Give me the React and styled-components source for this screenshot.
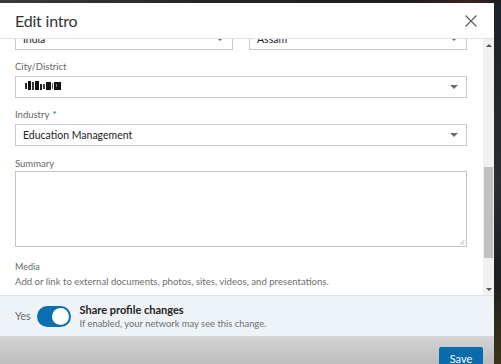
import React, { useLayoutEffect, useRef } from "react";
import styled, { createGlobalStyle } from "styled-components";

const Global = createGlobalStyle`
  html, body { margin: 0; padding: 0; }
  body {
    width: 501px; height: 364px; overflow: hidden;
    background: #1c1e20;
    font-family: Lato, "Noto Sans", sans-serif;
  }
`;

const Page = styled.div`
  width: 501px;
  height: 364px;
  overflow: hidden;
  display: flex;
  flex-direction: column;
  background: linear-gradient(90deg, #1a1c1f 0%, #23262a 60%, #2b2620 100%);
`;

const TopStrip = styled.div`
  height: 3px;
  flex: none;
  background: linear-gradient(90deg, #3a3a3a 0%, #262626 40%, #1b1d20 80%, #3a2222 94%, #1b1d20 100%);
`;

const Row = styled.div`
  display: flex;
  flex: 1;
  min-height: 0;
`;

const Dialog = styled.div`
  width: 494px;
  flex: none;
  display: flex;
  flex-direction: column;
  background: #fff;
`;

const Edge = styled.div`
  flex: 1;
  background: linear-gradient(180deg, #1c222a 0%, #2a2e33 50%, #1d1f22 75%, #3a3418 100%);
`;

const Header = styled.div`
  height: 35px;
  flex: none;
  display: flex;
  align-items: center;
  justify-content: space-between;
  padding: 0 17px 0 15px;
  border-bottom: 1px solid #e3e3e3;
`;

const Title = styled.h2`
  margin: 0;
  font-weight: 400;
  font-size: 16px;
  color: #333;
  letter-spacing: -0.2px;
`;

const CloseButton = styled.button`
  border: 0;
  background: none;
  padding: 0;
  width: 12px;
  height: 12px;
  display: flex;
  color: #5a5a5a;
`;

const Body = styled.div`
  height: 256px;
  flex: none;
  display: flex;
`;

const Scroller = styled.div`
  flex: 1;
  overflow: hidden;
`;

const Content = styled.div`
  padding: 16px 16px 40px 15px;
`;

const TwoCols = styled.div`
  display: grid;
  grid-template-columns: 218px 1fr;
  column-gap: 16px;
`;

const Field = styled.div`
  display: flex;
  flex-direction: column;
  margin-top: ${(p) => p.$top ?? 10}px;
`;

const Label = styled.label`
  font-size: 9.5px;
  line-height: 14px;
  color: #666;
  margin-bottom: ${(p) => p.$gap ?? 2}px;
`;

const Required = styled.span`
  color: #0073b1;
  margin-left: 3px;
`;

const Select = styled.div`
  height: 22px;
  box-sizing: border-box;
  border: 1px solid #c9c9c9;
  display: flex;
  align-items: center;
  justify-content: space-between;
  padding: 0 8px 0 7px;
  font-size: 10.5px;
  color: #222;
`;

const Caret = styled.span`
  width: 0;
  height: 0;
  border-left: 4px solid transparent;
  border-right: 4px solid transparent;
  border-top: 4px solid #6b6b6b;
`;

const TextArea = styled.div`
  height: 76px;
  box-sizing: border-box;
  border: 1px solid #c4c4c4;
  position: relative;
`;

const Grip = styled.svg`
  position: absolute;
  right: 1px;
  bottom: 1px;
`;

const MediaTitle = styled.div`
  margin-top: 13px;
  font-size: 9px;
  line-height: 13px;
  color: #666;
`;

const MediaText = styled.div`
  margin-top: 2px;
  font-size: 9.6px;
  line-height: 14px;
  color: #6e6e6e;
`;

const ScrollTrack = styled.div`
  width: 11px;
  flex: none;
  background: #f1f1f1;
  display: flex;
  flex-direction: column;
  align-items: center;
`;

const ScrollArrow = styled.div`
  height: 12px;
  flex: none;
  display: flex;
  align-items: center;
  justify-content: center;
  &::after {
    content: "";
    width: 0; height: 0;
    border-left: 3px solid transparent;
    border-right: 3px solid transparent;
    ${(p) => (p.$down ? "border-top: 3px solid #555;" : "border-bottom: 3px solid #555;")}
  }
`;

const ScrollMid = styled.div`
  flex: 1;
  width: 100%;
  display: flex;
  flex-direction: column;
  align-items: center;
`;

const Thumb = styled.div`
  width: 9px;
  height: 91px;
  margin-top: 116px;
  background: #c1c1c1;
`;

const Footer = styled.div`
  height: 42px;
  flex: none;
  box-sizing: border-box;
  border-top: 1px solid #dde3e8;
  border-bottom: 1px solid #cfd6dc;
  background: #eef3f7;
  display: flex;
  align-items: center;
  padding-left: 15px;
`;

const YesText = styled.span`
  font-size: 10.5px;
  color: #666;
  margin-right: 6px;
`;

const Toggle = styled.div`
  width: 34px;
  height: 21px;
  box-sizing: border-box;
  border-radius: 11px;
  background: #0a6fb0;
  display: flex;
  align-items: center;
  justify-content: flex-end;
  padding-right: 2px;
  margin-right: 9px;
`;

const Knob = styled.div`
  width: 17px;
  height: 17px;
  border-radius: 50%;
  background: #fff;
`;

const ShareText = styled.div`
  display: flex;
  flex-direction: column;
`;

const ShareTitle = styled.div`
  font-size: 11px;
  line-height: 14px;
  font-weight: 700;
  color: #222;
`;

const ShareSub = styled.div`
  font-size: 9.4px;
  line-height: 13px;
  color: #707070;
`;

const Actions = styled.div`
  flex: 1;
  background: linear-gradient(180deg, #d4d4d4 0%, #c4c4c4 50%, #b6b6b6 100%);
  display: flex;
  justify-content: flex-end;
  align-items: flex-start;
  padding: 10px 11px 0 0;
`;

const SaveButton = styled.button`
  width: 44px;
  height: 26px;
  border: 0;
  border-radius: 2px;
  background: #0a6bab;
  color: #fff;
  font-family: Lato, "Noto Sans", sans-serif;
  font-size: 11px;
  padding: 0;
  padding-bottom: 4px;
`;

function Redacted() {
  return (
    <svg width="40" height="10" viewBox="0 0 40 10">
      <rect x="2" y="2" width="2" height="6" fill="#222" />
      <rect x="5" y="0" width="3" height="9" fill="#111" />
      <rect x="9" y="1" width="2" height="8" fill="#333" />
      <rect x="12" y="0" width="4" height="9" fill="#111" />
      <rect x="17" y="3" width="2" height="6" fill="#222" />
      <rect x="20" y="3" width="2" height="5" fill="#444" />
      <rect x="23" y="1" width="5" height="8" fill="#111" />
      <rect x="29" y="2" width="1" height="6" fill="#555" />
      <rect x="31" y="1" width="7" height="8" fill="#111" />
      <rect x="33" y="3" width="1" height="3" fill="#888" />
    </svg>
  );
}

function SelectBox({ children }) {
  return (
    <Select>
      <span>{children}</span>
      <Caret />
    </Select>
  );
}

export default function App() {
  const ref = useRef(null);
  useLayoutEffect(() => {
    if (ref.current) ref.current.scrollTop = 43;
  }, []);

  return (
    <>
      <Global />
      <Page>
        <TopStrip />
        <Row>
          <Dialog>
            <Header>
              <Title>Edit intro</Title>
              <CloseButton aria-label="Close">
                <svg width="12" height="12" viewBox="0 0 12 12">
                  <path d="M0.5 0.5 L11.5 11.5 M11.5 0.5 L0.5 11.5" stroke="currentColor" strokeWidth="1.1" fill="none" />
                </svg>
              </CloseButton>
            </Header>
            <Body>
              <Scroller ref={ref}>
                <Content>
                  <TwoCols>
                    <Field $top={0}>
                      <Label>Country/Region *</Label>
                      <SelectBox>India</SelectBox>
                    </Field>
                    <Field $top={0}>
                      <Label>State</Label>
                      <SelectBox>Assam</SelectBox>
                    </Field>
                  </TwoCols>
                  <Field>
                    <Label>City/District</Label>
                    <SelectBox>
                      <Redacted />
                    </SelectBox>
                  </Field>
                  <Field>
                    <Label>
                      Industry<Required>*</Required>
                    </Label>
                    <SelectBox>Education Management</SelectBox>
                  </Field>
                  <Field $top={11}>
                    <Label $gap={0}>Summary</Label>
                    <TextArea>
                      <Grip width="6" height="6" viewBox="0 0 6 6">
                        <path d="M5.5 1 L1 5.5 M5.5 3.5 L3.5 5.5" stroke="#9a9a9a" strokeWidth="0.8" />
                      </Grip>
                    </TextArea>
                  </Field>
                  <MediaTitle>Media</MediaTitle>
                  <MediaText>
                    Add or link to external documents, photos, sites, videos, and presentations.
                  </MediaText>
                </Content>
              </Scroller>
              <ScrollTrack>
                <ScrollArrow />
                <ScrollMid>
                  <Thumb />
                </ScrollMid>
                <ScrollArrow $down />
              </ScrollTrack>
            </Body>
            <Footer>
              <YesText>Yes</YesText>
              <Toggle>
                <Knob />
              </Toggle>
              <ShareText>
                <ShareTitle>Share profile changes</ShareTitle>
                <ShareSub>If enabled, your network may see this change.</ShareSub>
              </ShareText>
            </Footer>
            <Actions>
              <SaveButton>Save</SaveButton>
            </Actions>
          </Dialog>
          <Edge />
        </Row>
      </Page>
    </>
  );
}
